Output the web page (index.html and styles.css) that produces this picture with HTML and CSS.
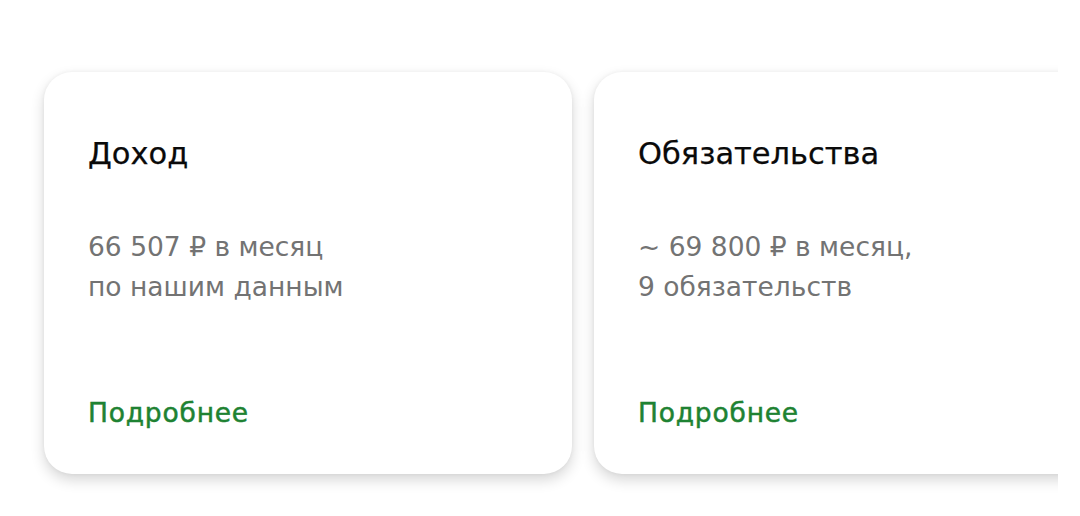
FILE: index.html
```html
<!DOCTYPE html>
<html lang="ru">
<head>
<meta charset="utf-8">
<link rel="stylesheet" href="styles.css">
</head>
<body>
<div class="scroller">
  <div class="cards">
    <div class="card">
      <div class="title">Доход</div>
      <div class="desc">66 507 ₽ в месяц<br>по нашим данным</div>
      <div class="link">Подробнее</div>
    </div>
    <div class="card">
      <div class="title">Обязательства</div>
      <div class="desc">~ 69 800 ₽ в месяц,<br>9 обязательств</div>
      <div class="link">Подробнее</div>
    </div>
  </div>
</div>
</body>
</html>
```
FILE: styles.css
```css
html, body {
  margin: 0;
  padding: 0;
  background: #ffffff;
}
body {
  font-family: "DejaVu Sans", "Noto Sans", sans-serif;
  width: 1080px;
  height: 516px;
  overflow: hidden;
}
.scroller {
  width: 1058px;
  overflow: hidden;
  padding: 72px 0 42px 0;
}
.cards {
  display: flex;
  gap: 22px;
  padding-left: 44px;
}
.card {
  flex: 0 0 auto;
  width: 528px;
  height: 402px;
  box-sizing: border-box;
  padding: 0 44px;
  border-radius: 28px;
  background: #fff;
  box-shadow: 0 6px 14px rgba(0,0,0,0.16), 0 0 4px rgba(0,0,0,0.05);
  display: flex;
  flex-direction: column;
}
.title {
  margin-top: 64px;
  font-size: 30.5px;
  line-height: 36px;
  color: #0a0a0a;
  -webkit-text-stroke: 0.25px #0a0a0a;
}
.desc {
  margin-top: 55px;
  font-size: 26.5px;
  line-height: 40px;
  color: #737373;
}
.link {
  margin-top: auto;
  margin-bottom: 43px;
  font-size: 26.5px;
  line-height: 36px;
  letter-spacing: 0.8px;
  color: #1e8232;
  -webkit-text-stroke: 0.5px #1e8232;
}
```
